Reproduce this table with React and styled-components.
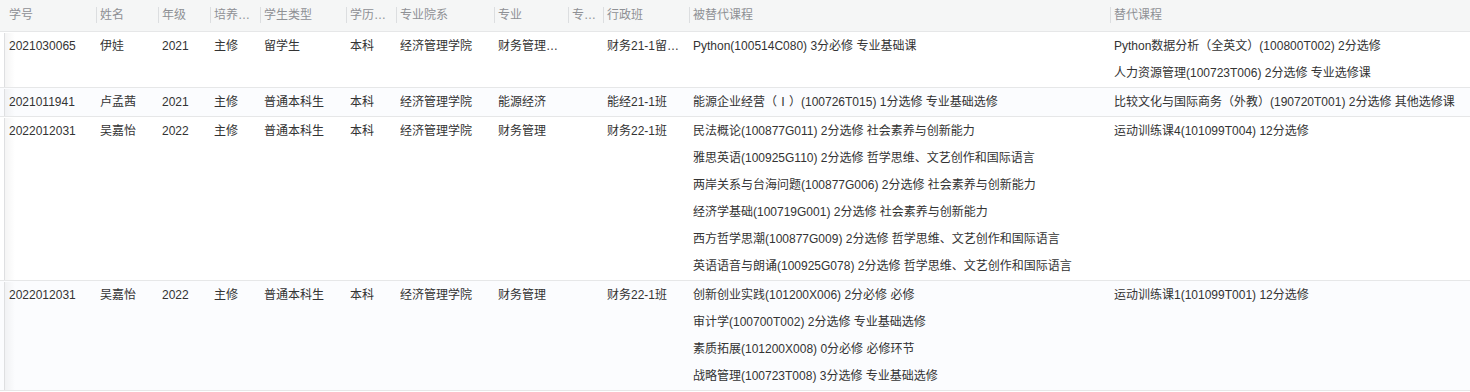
import React from "react";
import styled, { createGlobalStyle } from "styled-components";

const GlobalStyle = createGlobalStyle`
  html, body { margin: 0; padding: 0; background: #ffffff; }
  body {
    font-family: "Liberation Sans", "Noto Sans CJK SC", sans-serif;
    font-size: 12px;
    color: #333333;
  }
`;

const COLS = "97px 62px 52px 50px 86px 50px 98px 74px 35px 86px 421px 359px";

const Table = styled.div`
  width: 1470px;
  display: flex;
  flex-direction: column;
`;

const HeaderRow = styled.div`
  display: grid;
  grid-template-columns: ${COLS};
  height: 31px;
  background: #f5f6f6;
  border-bottom: 1px solid #e6e7e8;
`;

const HeaderCell = styled.div`
  position: relative;
  padding: 0 4px 0 ${(p) => (p.$first ? "9px" : "3px")};
  line-height: 31px;
  color: #8e9094;
  white-space: nowrap;
  overflow: hidden;
  text-overflow: ellipsis;
  &::after {
    content: "";
    display: ${(p) => (p.$last ? "none" : "block")};
    position: absolute;
    right: 0;
    top: 7px;
    width: 1px;
    height: 16px;
    background: #dcdee0;
  }
`;

const BodyRow = styled.div`
  display: grid;
  grid-template-columns: ${COLS};
  padding-top: 1px;
  background: ${(p) => (p.$striped ? "#fbfcfe" : "#ffffff")};
  border-bottom: 1px solid #e6e7e8;
`;

const Cell = styled.div`
  display: flex;
  flex-direction: column;
  min-width: 0;
  padding: 0 4px 0 ${(p) => (p.$first ? "9px" : "3px")};
  background: ${(p) =>
    p.$first
      ? "linear-gradient(to right, transparent 4px, #dedfe1 4px, #dedfe1 5px, rgba(0,0,0,0.045) 5px, rgba(0,0,0,0) 15px)"
      : "none"};
`;

const Line = styled.div`
  height: 27px;
  line-height: 27px;
  white-space: nowrap;
  overflow: hidden;
  text-overflow: ellipsis;
`;

const headers = [
  "学号",
  "姓名",
  "年级",
  "培养方案",
  "学生类型",
  "学历层次",
  "专业院系",
  "专业",
  "专业方向",
  "行政班",
  "被替代课程",
  "替代课程",
];

const rows = [
  {
    info: ["2021030065", "伊娃", "2021", "主修", "留学生", "本科", "经济管理学院", "财务管理（留学生）", "", "财务21-1留学生班"],
    replaced: ["Python(100514C080) 3分必修 专业基础课"],
    substitute: ["Python数据分析（全英文）(100800T002) 2分选修", "人力资源管理(100723T006) 2分选修 专业选修课"],
  },
  {
    info: ["2021011941", "卢孟茜", "2021", "主修", "普通本科生", "本科", "经济管理学院", "能源经济", "", "能经21-1班"],
    replaced: ["能源企业经营（Ⅰ）(100726T015) 1分选修 专业基础选修"],
    substitute: ["比较文化与国际商务（外教）(190720T001) 2分选修 其他选修课"],
  },
  {
    info: ["2022012031", "吴嘉怡", "2022", "主修", "普通本科生", "本科", "经济管理学院", "财务管理", "", "财务22-1班"],
    replaced: [
      "民法概论(100877G011) 2分选修 社会素养与创新能力",
      "雅思英语(100925G110) 2分选修 哲学思维、文艺创作和国际语言",
      "两岸关系与台海问题(100877G006) 2分选修 社会素养与创新能力",
      "经济学基础(100719G001) 2分选修 社会素养与创新能力",
      "西方哲学思潮(100877G009) 2分选修 哲学思维、文艺创作和国际语言",
      "英语语音与朗诵(100925G078) 2分选修 哲学思维、文艺创作和国际语言",
    ],
    substitute: ["运动训练课4(101099T004) 12分选修"],
  },
  {
    info: ["2022012031", "吴嘉怡", "2022", "主修", "普通本科生", "本科", "经济管理学院", "财务管理", "", "财务22-1班"],
    replaced: [
      "创新创业实践(101200X006) 2分必修 必修",
      "审计学(100700T002) 2分选修 专业基础选修",
      "素质拓展(101200X008) 0分必修 必修环节",
      "战略管理(100723T008) 3分选修 专业基础选修",
    ],
    substitute: ["运动训练课1(101099T001) 12分选修"],
  },
];

export default function App() {
  return (
    <>
      <GlobalStyle />
      <Table>
        <HeaderRow>
          {headers.map((h, i) => (
            <HeaderCell key={h} $first={i === 0} $last={i === headers.length - 1}>
              {h}
            </HeaderCell>
          ))}
        </HeaderRow>
        {rows.map((r, ri) => (
          <BodyRow key={ri} $striped={ri % 2 === 1}>
            {r.info.map((v, ci) => (
              <Cell key={ci} $first={ci === 0}>
                <Line>{v}</Line>
              </Cell>
            ))}
            <Cell>
              {r.replaced.map((c, i) => (
                <Line key={i}>{c}</Line>
              ))}
            </Cell>
            <Cell>
              {r.substitute.map((c, i) => (
                <Line key={i}>{c}</Line>
              ))}
            </Cell>
          </BodyRow>
        ))}
      </Table>
    </>
  );
}
